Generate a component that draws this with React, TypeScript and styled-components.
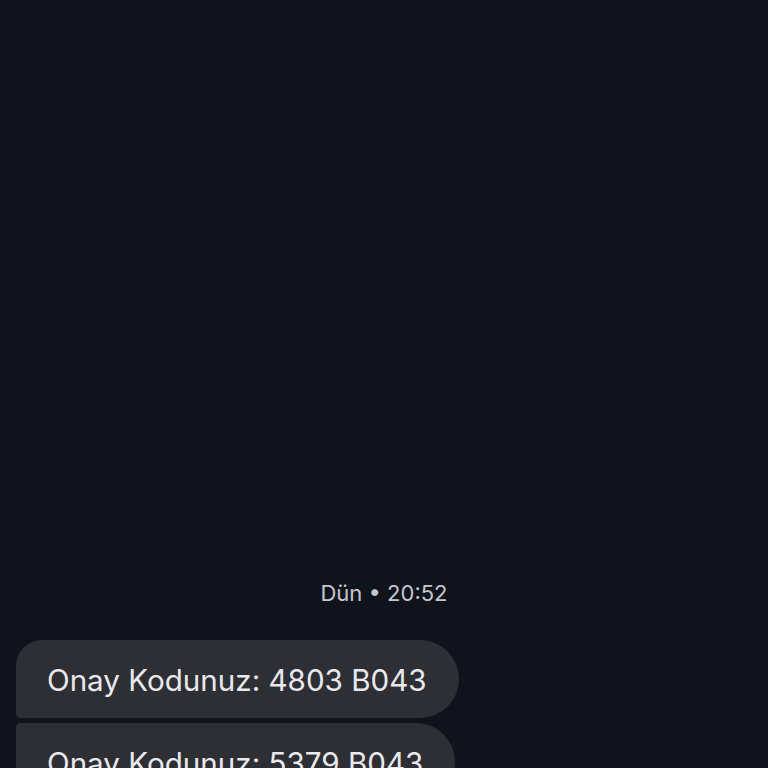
import React from 'react';
import styled, { createGlobalStyle } from 'styled-components';

const GlobalStyle = createGlobalStyle`
  html, body {
    margin: 0;
    padding: 0;
    background: #10131b;
  }
  body {
    font-family: Inter, Roboto, "Noto Sans", "Liberation Sans", sans-serif;
  }
`;

const Screen = styled.div`
  display: flex;
  flex-direction: column;
  height: 768px;
  overflow: hidden;
  background: #10131b;
  padding: 578px 16px 0;
  box-sizing: border-box;
`;

const Stamp = styled.div`
  align-self: center;
  color: #c6c7cd;
  font-size: 22px;
  line-height: 30px;
  margin-bottom: 32px;
`;

const Thread = styled.div`
  display: flex;
  flex-direction: column;
  align-items: flex-start;
  gap: 5px;
`;

const Bubble = styled.div<{ $first?: boolean; $last?: boolean }>`
  background: #2e2f34;
  color: #e9e9ed;
  font-size: 29.6px;
  line-height: 36px;
  padding: 22px 32px 20px 31px;
  white-space: nowrap;
  border-radius: ${(p) => (p.$first ? '26px' : '5px')} 39px 39px
    ${(p) => (p.$last ? '26px' : '5px')};
`;

const messages = ['Onay Kodunuz: 4803 B043', 'Onay Kodunuz: 5379 B043'];

export default function App() {
  return (
    <>
      <GlobalStyle />
      <Screen>
        <Stamp>Dün • 20:52</Stamp>
        <Thread>
          {messages.map((m, i) => (
            <Bubble key={i} $first={i === 0} $last={i === messages.length - 1}>
              {m}
            </Bubble>
          ))}
        </Thread>
      </Screen>
    </>
  );
}
